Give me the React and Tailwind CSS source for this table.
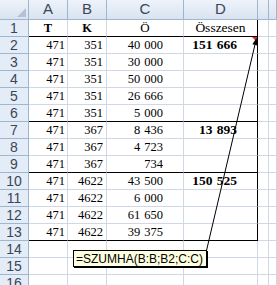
import React from "react";

const rows = [
  { n: 1, a: "T", b: "K", c: "Ö", d: "Összesen", head: true, line: true },
  { n: 2, a: "471", b: "351", c: "40 000", d: "151 666", comment: true },
  { n: 3, a: "471", b: "351", c: "30 000" },
  { n: 4, a: "471", b: "351", c: "50 000" },
  { n: 5, a: "471", b: "351", c: "26 666" },
  { n: 6, a: "471", b: "351", c: "5 000", line: true },
  { n: 7, a: "471", b: "367", c: "8 436", d: "13 893" },
  { n: 8, a: "471", b: "367", c: "4 723" },
  { n: 9, a: "471", b: "367", c: "734", line: true },
  { n: 10, a: "471", b: "4622", c: "43 500", d: "150 525" },
  { n: 11, a: "471", b: "4622", c: "6 000" },
  { n: 12, a: "471", b: "4622", c: "61 650" },
  { n: 13, a: "471", b: "4622", c: "39 375", line: true },
  { n: 14 },
  { n: 15 },
  { n: 16 },
];

const letters = ["A", "B", "C", "D", "", ""];

function Cell({ row, col, children, className = "" }) {
  const bottom = row.line && col < 4 ? "border-b-black" : "border-b-[#d0d7e5]";
  const right = col === 3 && row.n <= 13 ? "border-r-black" : "border-r-[#d0d7e5]";
  return (
    <div className={`h-[17px] border-b border-r ${bottom} ${right} flex items-center overflow-hidden whitespace-nowrap leading-[16px] ${className}`}>
      {children}
    </div>
  );
}

export default function App() {
  return (
    <div className="relative w-[277px] h-[285px] overflow-hidden bg-white">
      <div className="grid grid-cols-[29px_39px_39px_77px_74px_11px_1fr] font-['Liberation_Serif',serif] text-[12.5px] text-black [word-spacing:1px]">
        {/* column headers */}
        <div className="h-[20px] border-r border-b border-[#9eb6ce] bg-gradient-to-b from-[#eef3fa] to-[#d9e3f0] relative">
          <div className="absolute right-[2px] bottom-[2px] w-0 h-0 border-l-[9px] border-l-transparent border-b-[9px] border-b-[#b4c2d5]" />
        </div>
        {letters.map((l, i) => (
          <div
            key={i}
            className="h-[20px] border-r border-b border-[#9eb6ce] bg-gradient-to-b from-[#eef3fa] to-[#d9e3f0] flex items-center justify-center font-['Liberation_Sans',sans-serif] text-[15px] text-[#3a4657]"
          >
            {l}
          </div>
        ))}

        {rows.map((r) => (
          <React.Fragment key={r.n}>
            <div className="h-[17px] border-r border-b border-[#9eb6ce] bg-[#e4ecf7] flex items-center justify-center font-['Liberation_Sans',sans-serif] text-[14px] text-[#3a4657] leading-[16px]">
              {r.n}
            </div>
            <Cell row={r} col={0} className={r.head ? "justify-center font-bold" : "justify-end pr-[2px]"}>
              {r.a}
            </Cell>
            <Cell row={r} col={1} className={r.head ? "justify-center font-bold" : "justify-end pr-[3px]"}>
              {r.b}
            </Cell>
            <Cell row={r} col={2} className={r.head ? "justify-center text-[13px]" : "justify-end pr-[20px]"}>
              {r.c}
            </Cell>
            <Cell row={r} col={3} className={r.head ? "justify-center text-[13.5px]" : "justify-end pr-[20px] font-bold text-[13.5px]"}>
              {r.d}
            </Cell>
            <Cell row={r} col={4} />
            <Cell row={r} col={5} />
          </React.Fragment>
        ))}
      </div>

      {/* comment tooltip */}
      <div className="absolute left-[73px] top-[250px] w-[134px] h-[17px] bg-[#ffffe1] border border-black shadow-[1px_1px_0_#000] flex items-center pl-[2px] font-['Liberation_Sans',sans-serif] text-[12px] leading-none whitespace-nowrap">
        =SZUMHA(B:B;B2;C:C)
      </div>

      <svg className="absolute inset-0 pointer-events-none" width="277" height="285" viewBox="0 0 277 285">
        <polygon points="252,37 257,37 257,42" fill="#e02828" />
        <line x1="206.5" y1="250.5" x2="255" y2="44.5" stroke="#000" strokeWidth="1" />
        <polygon points="256.5,38 257.6,45.4 252.4,44.2" fill="#000" />
      </svg>
    </div>
  );
}
